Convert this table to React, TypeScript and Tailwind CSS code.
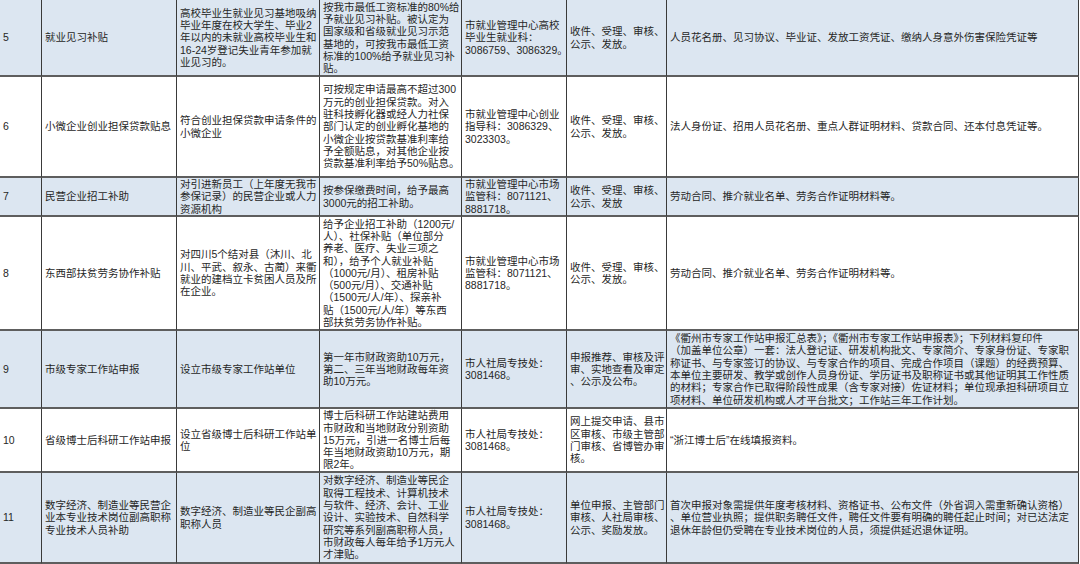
import { Fragment } from "react";

type Row = {
  no: string;
  name: string[];
  cond: string[];
  std: string[];
  contact: string[];
  process: string[];
  materials: string[];
  shaded: boolean;
};

const rows: Row[] = [
  {
    no: "5",
    name: ["就业见习补贴"],
    cond: [
      "高校毕业生就业见习基地吸纳",
      "毕业年度在校大学生、毕业2",
      "年以内的未就业高校毕业生和",
      "16-24岁登记失业青年参加就",
      "业见习的。",
    ],
    std: [
      "按我市最低工资标准的80%给",
      "予就业见习补贴。被认定为",
      "国家级和省级就业见习示范",
      "基地的，可按我市最低工资",
      "标准的100%给予就业见习补",
      "贴。",
    ],
    contact: ["市就业管理中心高校", "毕业生就业科：", "3086759、3086329。"],
    process: ["收件、受理、审核、", "公示、发放。"],
    materials: ["人员花名册、见习协议、毕业证、发放工资凭证、缴纳人身意外伤害保险凭证等"],
    shaded: true,
  },
  {
    no: "6",
    name: ["小微企业创业担保贷款贴息"],
    cond: ["符合创业担保贷款申请条件的", "小微企业"],
    std: [
      "可按规定申请最高不超过300",
      "万元的创业担保贷款。对入",
      "驻科技孵化器或经人力社保",
      "部门认定的创业孵化基地的",
      "小微企业按贷款基准利率给",
      "予全额贴息，对其他企业按",
      "贷款基准利率给予50%贴息。",
    ],
    contact: ["市就业管理中心创业", "指导科：3086329、", "3023303。"],
    process: ["收件、受理、审核、", "公示、发放。"],
    materials: ["法人身份证、招用人员花名册、重点人群证明材料、贷款合同、还本付息凭证等。"],
    shaded: false,
  },
  {
    no: "7",
    name: ["民营企业招工补助"],
    cond: ["对引进新员工（上年度无我市", "参保记录）的民营企业或人力", "资源机构"],
    std: ["按参保缴费时间，给予最高", "3000元的招工补助。"],
    contact: ["市就业管理中心市场", "监管科：8071121、", "8881718。"],
    process: ["收件、受理、审核、", "公示、发放"],
    materials: ["劳动合同、推介就业名单、劳务合作证明材料等。"],
    shaded: true,
  },
  {
    no: "8",
    name: ["东西部扶贫劳务协作补贴"],
    cond: [
      "对四川5个结对县（沐川、北",
      "川、平武、叙永、古蔺）来衢",
      "就业的建档立卡贫困人员及所",
      "在企业。",
    ],
    std: [
      "给予企业招工补助（1200元/",
      "人）、社保补贴（单位部分",
      "养老、医疗、失业三项之",
      "和），给予个人就业补贴",
      "（1000元/月）、租房补贴",
      "（500元/月）、交通补贴",
      "（1500元/人/年）、探亲补",
      "贴（1500元/人/年）等东西",
      "部扶贫劳务协作补贴。",
    ],
    contact: ["市就业管理中心市场", "监管科：8071121、", "8881718。"],
    process: ["收件、受理、审核、", "公示、发放。"],
    materials: ["劳动合同、推介就业名单、劳务合作证明材料等。"],
    shaded: false,
  },
  {
    no: "9",
    name: ["市级专家工作站申报"],
    cond: ["设立市级专家工作站单位"],
    std: ["第一年市财政资助10万元，", "第二、三年当地财政每年资", "助10万元。"],
    contact: ["市人社局专技处：", "3081468。"],
    process: ["申报推荐、审核及评", "审、实地查看及审定", "、公示及公布。"],
    materials: [
      "《衢州市专家工作站申报汇总表》；《衢州市专家工作站申报表》；下列材料复印件",
      "（加盖单位公章）一套：法人登记证、研发机构批文、专家简介、专家身份证、专家职",
      "称证书、与专家签订的协议、与专家合作的项目、完成合作项目（课题）的经费预算、",
      "本单位主要研发、教学或创作人员身份证、学历证书及职称证书或其他证明其工作性质",
      "的材料；专家合作已取得阶段性成果（含专家对接）佐证材料；单位现承担科研项目立",
      "项材料、单位研发机构或人才平台批文；工作站三年工作计划。",
    ],
    shaded: true,
  },
  {
    no: "10",
    name: ["省级博士后科研工作站申报"],
    cond: ["设立省级博士后科研工作站单", "位"],
    std: [
      "博士后科研工作站建站费用",
      "市财政和当地财政分别资助",
      "15万元，引进一名博士后每",
      "年当地财政资助10万元，期",
      "限2年。",
    ],
    contact: ["市人社局专技处：", "3081468。"],
    process: ["网上提交申请、县市", "区审核、市级主管部", "门审核、省博管办审", "核。"],
    materials: ["“浙江博士后”在线填报资料。"],
    shaded: false,
  },
  {
    no: "11",
    name: ["数字经济、制造业等民营企", "业本专业技术岗位副高职称", "专业技术人员补助"],
    cond: ["数字经济、制造业等民企副高", "职称人员"],
    std: [
      "对数字经济、制造业等民企",
      "取得工程技术、计算机技术",
      "与软件、经济、会计、工业",
      "设计、实验技术、自然科学",
      "研究等系列副高职称人员，",
      "市财政每人每年给予1万元人",
      "才津贴。",
    ],
    contact: ["市人社局专技处：", "3081468。"],
    process: ["单位申报、主管部门", "审核、人社局审核、", "公示、奖励发放。"],
    materials: [
      "首次申报对象需提供年度考核材料、资格证书、公布文件（外省调入需重新确认资格）",
      "、单位营业执照；提供职务聘任文件，聘任文件要有明确的聘任起止时间；对已达法定",
      "退休年龄但仍受聘在专业技术岗位的人员，须提供延迟退休证明。",
    ],
    shaded: true,
  },
];

function Cell({ lines, shaded }: { lines: string[]; shaded: boolean }) {
  return (
    <div
      className={`flex items-center overflow-hidden border-r border-b-2 border-r-[#3a3a3a] border-b-[#5e5e5e] pl-[3px] pr-[1px] ${
        shaded ? "bg-[#dce6f1]" : "bg-white"
      }`}
    >
      <div>
        {lines.map((l, i) => (
          <span key={i} className="block whitespace-nowrap">
            {l}
          </span>
        ))}
      </div>
    </div>
  );
}

export default function App() {
  return (
    <div className="h-[564px] w-[1080px] overflow-hidden bg-white">
      <div
        className="grid w-[1079px] grid-cols-[42px_135px_143px_142px_105px_100px_412px] grid-rows-[77px_101px_39px_114px_78px_64px_91px] text-[10.5px] leading-[12.3px] text-[#262626]"
        style={{ fontFamily: '"Liberation Sans", "Noto Sans CJK SC", sans-serif' }}
      >
        {rows.map((r) => (
          <Fragment key={r.no}>
            <Cell lines={[r.no]} shaded={r.shaded} />
            <Cell lines={r.name} shaded={r.shaded} />
            <Cell lines={r.cond} shaded={r.shaded} />
            <Cell lines={r.std} shaded={r.shaded} />
            <Cell lines={r.contact} shaded={r.shaded} />
            <Cell lines={r.process} shaded={r.shaded} />
            <Cell lines={r.materials} shaded={r.shaded} />
          </Fragment>
        ))}
      </div>
    </div>
  );
}
